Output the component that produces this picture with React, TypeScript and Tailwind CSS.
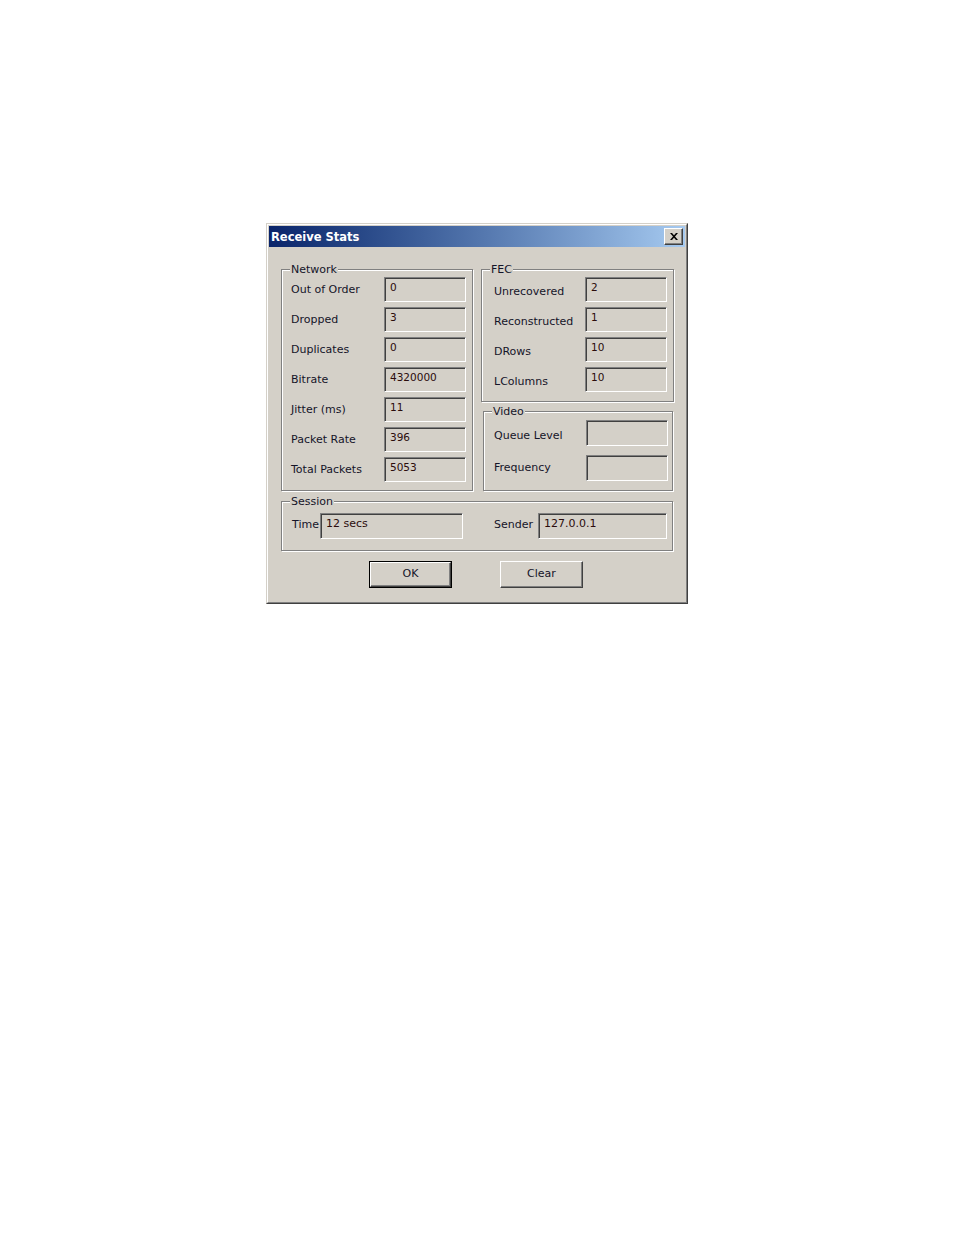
import type { ReactNode } from "react";

const font = { fontFamily: "'DejaVu Sans', Verdana, sans-serif" };

function GroupBox({
  title,
  className,
  children,
}: {
  title: string;
  className: string;
  children: ReactNode;
}) {
  return (
    <div
      className={`relative border border-[#808080] shadow-[inset_1px_1px_0_#fff,1px_1px_0_#fff] ${className}`}
    >
      <span className="absolute left-[8px] top-[-7px] bg-[#d4d0c8] px-[1px] text-[11px] leading-[14px] text-[#141428]">
        {title}
      </span>
      {children}
    </div>
  );
}

function Field({ value, className }: { value?: string; className: string }) {
  return (
    <div
      className={`border border-t-[#808080] border-l-[#808080] border-r-white border-b-white bg-[#d4d0c8] pl-[5px] pt-[3px] text-[10.5px] leading-[13px] text-[#2b0c0c] shadow-[inset_1px_1px_0_#404040] ${className}`}
    >
      {value}
    </div>
  );
}

function Row({
  label,
  value,
  labelClass,
  fieldClass,
}: {
  label: string;
  value?: string;
  labelClass: string;
  fieldClass: string;
}) {
  return (
    <div className="flex items-center">
      <span className={`text-[11px] leading-[14px] text-[#141428] ${labelClass}`}>
        {label}
      </span>
      <Field value={value} className={fieldClass} />
    </div>
  );
}

const network = [
  ["Out of Order", "0"],
  ["Dropped", "3"],
  ["Duplicates", "0"],
  ["Bitrate", "4320000"],
  ["Jitter (ms)", "11"],
  ["Packet Rate", "396"],
  ["Total Packets", "5053"],
];

const fec = [
  ["Unrecovered", "2"],
  ["Reconstructed", "1"],
  ["DRows", "10"],
  ["LColumns", "10"],
];

function Button({ label, isDefault }: { label: string; isDefault?: boolean }) {
  return (
    <button
      className={`h-[27px] w-[83px] text-[11px] text-[#141428] ${
        isDefault ? "border border-black" : ""
      }`}
    >
      <span className="flex h-full w-full items-center justify-center border border-t-white border-l-white border-r-[#404040] border-b-[#404040] bg-[#d4d0c8] shadow-[inset_-1px_-1px_0_#808080]">
        {label}
      </span>
    </button>
  );
}

export default function App() {
  return (
    <div className="min-h-screen bg-white pl-[266px] pt-[223px]" style={font}>
      {/* Dialog frame */}
      <div className="h-[381px] w-[422px] border border-t-[#d4d0c8] border-l-[#d4d0c8] border-r-[#404040] border-b-[#404040] bg-[#d4d0c8]">
        <div className="h-full w-full border border-t-white border-l-white border-r-[#808080] border-b-[#808080] p-[1px]">
          {/* Title bar */}
          <div className="flex h-[21px] items-center justify-between bg-gradient-to-r from-[#0a246a] to-[#a6caf0] pl-[2px] pr-[2px]">
            <span className="pt-[3px] text-[11.5px] font-bold text-white">Receive Stats</span>
            <span className="flex h-[17px] w-[19px] items-center justify-center border border-t-white border-l-white border-r-[#404040] border-b-[#404040] bg-[#d4d0c8] shadow-[inset_-1px_-1px_0_#808080]">
              <svg width="8" height="7" viewBox="0 0 8 7">
                <path d="M0 0h2l2 2.2L6 0h2L5 3.5 8 7H6L4 4.8 2 7H0l3-3.5z" fill="#000" />
              </svg>
            </span>
          </div>

          {/* Body */}
          <div className="pl-[12px] pt-[22px]">
            <div className="flex">
              <GroupBox title="Network" className="h-[222px] w-[192px] pl-[9px] pt-[7px]">
                <div className="flex flex-col gap-[5px]">
                  {network.map(([l, v]) => (
                    <Row
                      key={l}
                      label={l}
                      value={v}
                      labelClass="w-[93px]"
                      fieldClass="h-[25px] w-[82px]"
                    />
                  ))}
                </div>
              </GroupBox>

              <div className="ml-[8px] flex flex-col">
                <GroupBox title="FEC" className="h-[133px] w-[193px] pl-[12px] pt-[7px]">
                  <div className="flex flex-col gap-[5px]">
                    {fec.map(([l, v]) => (
                      <Row
                        key={l}
                        label={l}
                        value={v}
                        labelClass="w-[91px] pt-[4px]"
                        fieldClass="h-[25px] w-[82px]"
                      />
                    ))}
                  </div>
                </GroupBox>
                <GroupBox title="Video" className="ml-[2px] mt-[9px] h-[80px] w-[190px] pl-[10px] pt-[8px]">
                  <div className="flex flex-col gap-[9px]">
                    <Row label="Queue Level" labelClass="w-[92px] pt-[6px]" fieldClass="h-[26px] w-[82px]" />
                    <Row label="Frequency" labelClass="w-[92px]" fieldClass="h-[26px] w-[82px]" />
                  </div>
                </GroupBox>
              </div>
            </div>

            <GroupBox title="Session" className="mt-[10px] flex h-[50px] w-[392px] pl-[10px] pt-[11px]">
              <div className="flex items-start">
                <span className="w-[28px] pt-[5px] text-[11px] leading-[14px] text-[#141428]">Time</span>
                <Field value="12 secs" className="h-[26px] w-[143px] !text-[11px]" />
                <span className="ml-[31px] w-[44px] pt-[5px] text-[11px] leading-[14px] text-[#141428]">
                  Sender
                </span>
                <Field value="127.0.0.1" className="h-[26px] w-[129px] !text-[11px]" />
              </div>
            </GroupBox>

            <div className="mt-[9px] flex">
              <div className="ml-[88px]">
                <Button label="OK" isDefault />
              </div>
              <div className="ml-[48px]">
                <Button label="Clear" />
              </div>
            </div>
          </div>
        </div>
      </div>
    </div>
  );
}
